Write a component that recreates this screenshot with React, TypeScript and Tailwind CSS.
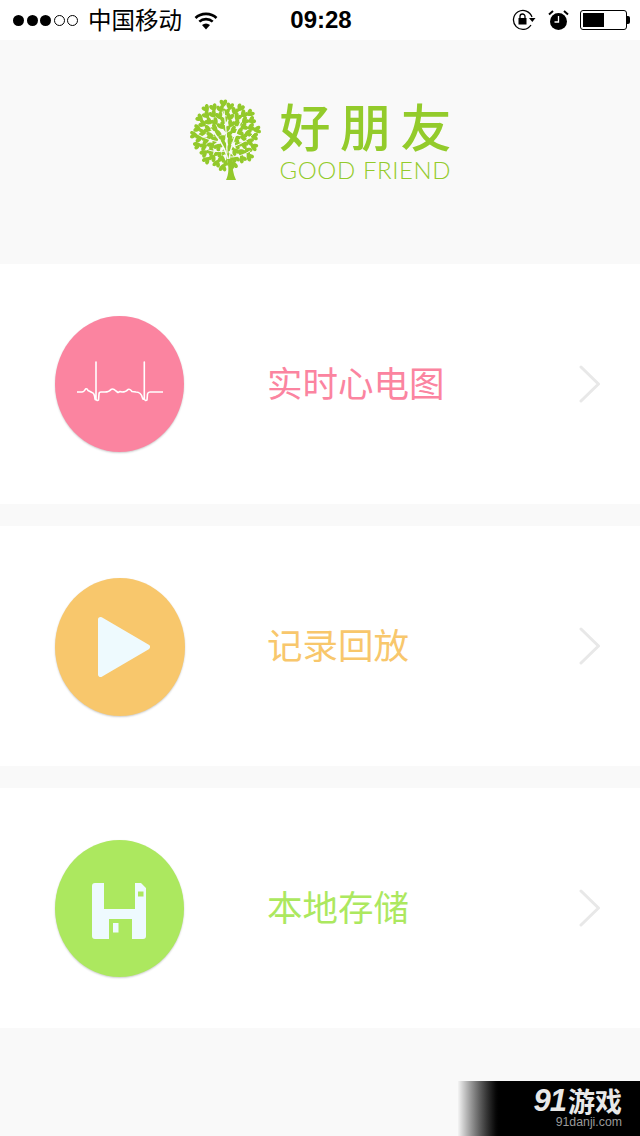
import type { ReactNode } from 'react'

// leaves of the logo tree, spread with a golden angle so they fill the crown evenly
const leaves = Array.from({ length: 76 }, (_, i) => {
  const r = 33 * Math.sqrt((i + 0.5) / 76)
  const a = i * 2.39996
  return {
    x: 35 + r * Math.cos(a),
    y: 36 + r * Math.sin(a),
    rot: (a * 180) / Math.PI + 90,
  }
})

function TreeLogo() {
  return (
    <svg width="74" height="82" viewBox="0 0 74 82" className="shrink-0 overflow-visible">
      {leaves.map((l, i) => (
        <path
          key={i}
          transform={`translate(${l.x.toFixed(1)} ${l.y.toFixed(1)}) rotate(${l.rot.toFixed(0)}) scale(0.62)`}
          d="M0 6 C-8 0 -7 -6 -3.5 -6 C-1.5 -6 0 -4.5 0 -3 C0 -4.5 1.5 -6 3.5 -6 C7 -6 8 0 0 6 Z"
          fill="#93c92b"
        />
      ))}
      <g fill="none" stroke="#f9f9f9" strokeLinecap="round">
        <path d="M38 66 C36 52 30 42 20 30" strokeWidth="1.4" />
        <path d="M38 60 C40 46 44 36 50 22" strokeWidth="1.4" />
        <path d="M36 54 C36 40 35 28 33 12" strokeWidth="1.2" />
        <path d="M29 43 C22 42 15 40 8 36" strokeWidth="1" />
        <path d="M41 48 C48 46 56 42 63 34" strokeWidth="1" />
        <path d="M39 58 C46 58 53 56 59 52" strokeWidth="1" />
        <path d="M34 52 C28 53 22 53 15 50" strokeWidth="1" />
      </g>
      <path d="M36 60 C38 68 38 75 35 81 H45 C42 75 41 68 42 60 Z" fill="#93c92b" />
    </svg>
  )
}

function EcgIcon() {
  return (
    <svg width="88" height="42" viewBox="0 0 88 42" fill="none" stroke="#fff" strokeWidth="1.6" strokeLinejoin="round" className="mb-[4px]">
      <path d="M1 31 H6 Q8 31 9.5 28 Q11 27 12 29.5 L16 31.5 Q18.5 32 19 38 Q19.6 40 20 36 V1 V38 Q21 40.5 22.5 39 L23 33 Q23 31 25 31 H29 Q33 31 35 28.5 Q37 27 40 30 L42 31.5 L44 30.5 L46 31 Q50 31 52 28.5 Q54 27.5 56 30.5 L60 31 Q65 31 66.5 37 Q67.5 40 68.3 36 V1 V38 Q69.5 40.5 71 39 L71.5 33 Q72 31 74 31 H87" />
    </svg>
  )
}

function PlayIcon() {
  return (
    <svg width="52" height="60" viewBox="0 0 52 60" className="ml-[7px]">
      <path d="M2.500 2.500 L49.500 30 L2.500 57.500 Z" fill="#eefafe" stroke="#eefafe" strokeWidth="5" strokeLinejoin="round" />
    </svg>
  )
}

function DiskIcon() {
  return (
    <svg width="54" height="56" viewBox="0 0 54 56" className="mr-[1px] mt-[5px]">
      <path
        d="M3 0 H12 V26 H43 V0 H49 L54 5 V53 Q54 56 51 56 H40 V36 H17 V56 H3 Q0 56 0 53 V3 Q0 0 3 0 Z"
        fill="#eefafe"
      />
      <rect x="21" y="40" width="5.500" height="9.500" fill="#eefafe" />
      <rect x="46" y="8.500" width="5.500" height="5" fill="#ace85f" />
    </svg>
  )
}

function Chevron() {
  return (
    <svg width="22" height="38" viewBox="0 0 22 38" fill="none" stroke="#e8e8e8" strokeWidth="3" strokeLinecap="round" strokeLinejoin="round" className="shrink-0">
      <path d="M2 2 L19.500 19 L2 36" />
    </svg>
  )
}

function MenuRow({
  label,
  circle,
  text,
  icon,
}: {
  label: string
  circle: string
  text: string
  icon: ReactNode
}) {
  return (
    <div className="flex h-[240px] items-center bg-white pl-[55px] pr-[39px]">
      <div className="w-[130px] shrink-0">
        <div className={`flex items-center justify-center rounded-[50%] shadow-[0_1px_2px_rgba(0,0,0,0.2)] ${circle}`}>
          {icon}
        </div>
      </div>
      <div className={`mb-[4px] flex-1 pl-[82px] text-[35.500px] leading-none ${text}`}>{label}</div>
      <Chevron />
    </div>
  )
}

function StatusBar() {
  return (
    <div className="flex h-10 items-center bg-white pl-[13px] pr-[10px] text-black">
      <div className="flex flex-1 items-center">
        <div className="flex gap-[2.500px]">
          <span className="h-[11px] w-[11px] rounded-full bg-black" />
          <span className="h-[11px] w-[11px] rounded-full bg-black" />
          <span className="h-[11px] w-[11px] rounded-full bg-black" />
          <span className="h-[11px] w-[11px] rounded-full border border-black" />
          <span className="h-[11px] w-[11px] rounded-full border border-black" />
        </div>
        <span className="ml-[10px] text-[23.500px] leading-none">中国移动</span>
        <svg width="24" height="19" viewBox="0 0 24 19" className="ml-[12px]">
          <g fill="none" stroke="#000" strokeWidth="2.600">
            <path d="M1.500 7 C7 1.500 17 1.500 22.500 7" />
            <path d="M5.300 10.600 C9 7.300 15 7.300 18.700 10.600" />
          </g>
          <path d="M8 14 C10.500 12 13.500 12 16 14 L12 18.500 Z" fill="#000" />
        </svg>
      </div>
      <span className="-ml-[1px] font-['Liberation_Sans',sans-serif] text-[24px] font-bold leading-none">09:28</span>
      <div className="flex flex-1 items-center justify-end">
        <svg width="24" height="22" viewBox="0 0 24 22">
          <path d="M19 16 A9.500 9.500 0 1 1 20 8" fill="none" stroke="#000" strokeWidth="1.300" />
          <path d="M17 9 H23.500 L20.300 13 Z" fill="#000" />
          <rect x="6.500" y="9" width="8" height="6.500" fill="#000" />
          <path d="M8 9 V7.500 A2.500 2.500 0 0 1 13 7.500 V9" fill="none" stroke="#000" strokeWidth="1.300" />
        </svg>
        <svg width="21" height="21" viewBox="0 0 21 21" className="ml-[12px] mr-[11px]">
          <circle cx="10.500" cy="11.500" r="8.500" fill="#000" />
          <path d="M10.500 6 V12 H6.500" fill="none" stroke="#fff" strokeWidth="1.300" />
          <path d="M1 4.500 L5 1 M20 4.500 L16 1" stroke="#000" strokeWidth="2" />
        </svg>
        <div className="flex items-center">
          <div className="h-[20px] w-[47px] rounded-[3px] border border-black p-[2px]">
            <div className="h-full w-[21px] bg-black" />
          </div>
          <div className="h-[8px] w-[3px] rounded-r-[2px] bg-black" />
        </div>
      </div>
    </div>
  )
}

export default function App() {
  return (
    <div className="flex h-[1136px] w-[640px] flex-col overflow-hidden bg-[#f9f9f9] font-['Noto_Sans_CJK_SC','Noto_Sans',sans-serif]">
      <StatusBar />

      {/* Logo */}
      <div className="flex h-[224px] items-start justify-center pl-[2px] pt-[59px]">
        <TreeLogo />
        <div className="ml-[15px] flex w-[172px] flex-col text-[#93cb2b]">
          <span className="-mt-[3px] whitespace-nowrap text-[51px] font-medium leading-[59px] tracking-[9.500px]">好朋友</span>
          <span className="mt-[1px] whitespace-nowrap font-['Lato',sans-serif] text-[24px] font-light leading-[28px] tracking-[0.600px]">GOOD FRIEND</span>
        </div>
      </div>

      <div className="flex flex-col gap-[22px]">
        <MenuRow label="实时心电图" circle="mr-[1px] h-[136px] bg-[#fb84a0]" text="text-[#fb84a0]" icon={<EcgIcon />} />
        <MenuRow label="记录回放" circle="mt-[2px] h-[138px] bg-[#f8c76c]" text="text-[#f8c76c]" icon={<PlayIcon />} />
        <MenuRow label="本地存储" circle="mr-[1px] h-[137px] bg-[#ace85f]" text="text-[#ace85f]" icon={<DiskIcon />} />
      </div>

      {/* Site watermark */}
      <div className="flex flex-1 items-end justify-end">
        <div className="flex h-[55px] w-[182px] flex-col items-end bg-linear-to-r from-[#f4f4f4] to-black to-[24%] pr-[18px] pt-[6px] leading-none">
          <span className="flex items-center text-[#e8e8e8]">
            <span className="font-['Liberation_Sans',sans-serif] text-[31px] font-bold italic leading-[28px] tracking-[-1px]">91</span>
            <span className="ml-[2px] text-[27px] font-bold leading-[28px]">游戏</span>
          </span>
          <span className="mt-[1px] font-['Liberation_Sans',sans-serif] text-[12.300px] text-[#9a9a9a]">91danji.com</span>
        </div>
      </div>
    </div>
  )
}
